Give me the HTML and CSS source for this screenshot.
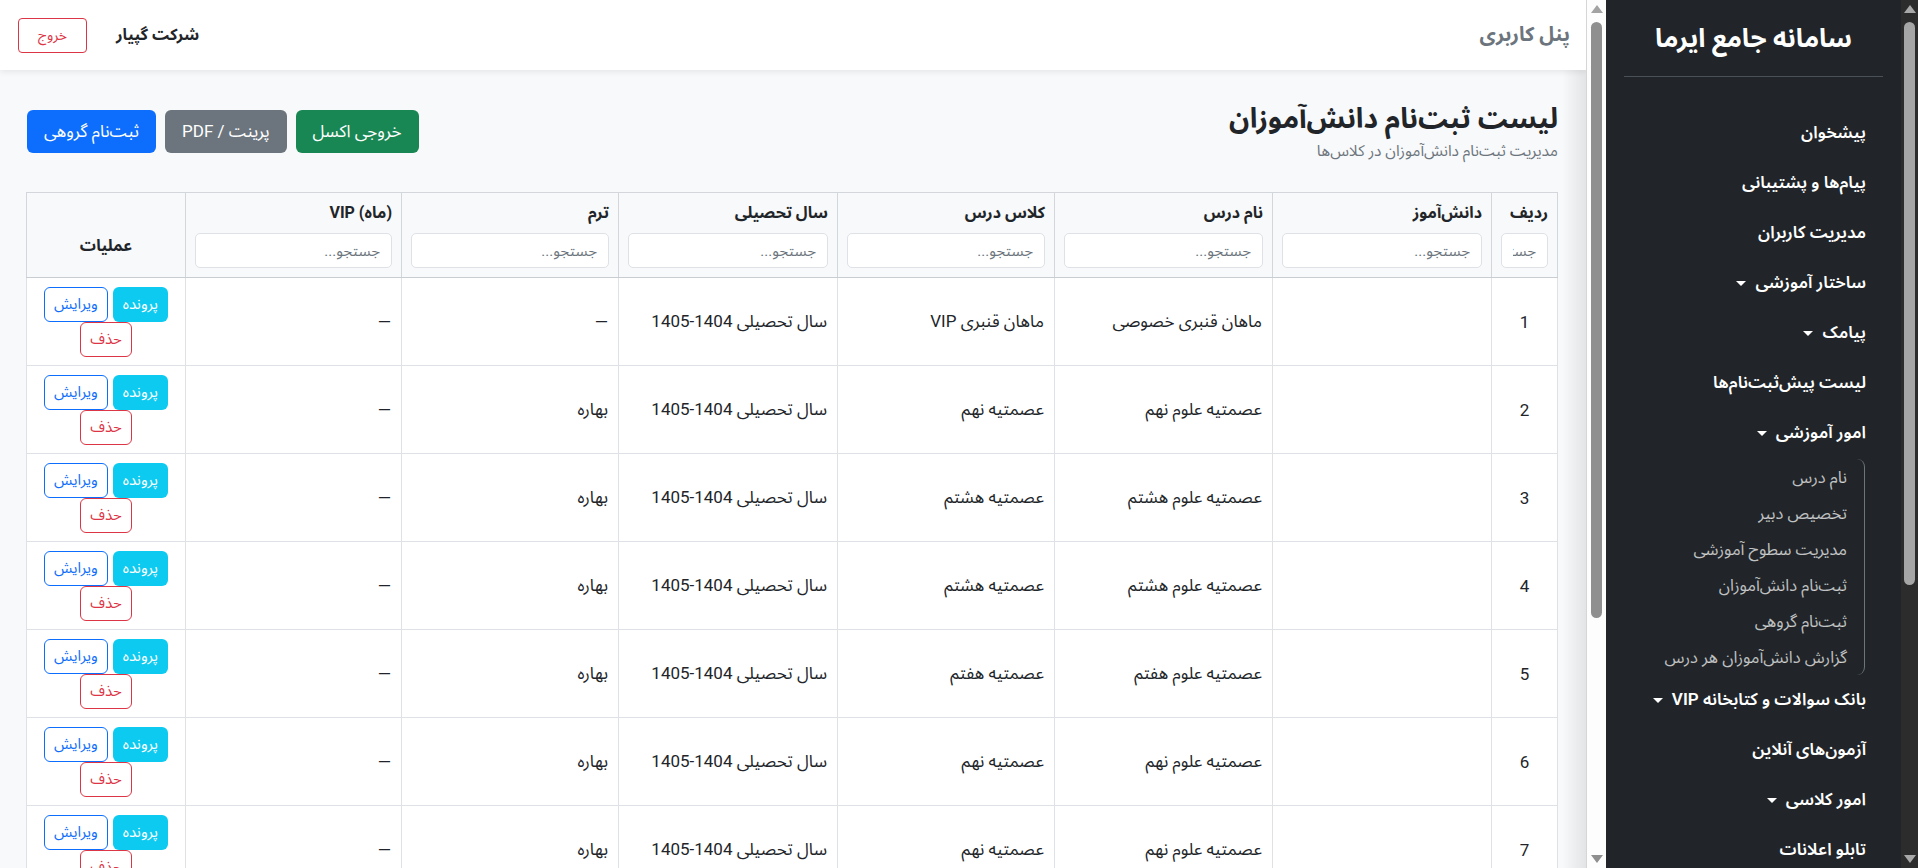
FILE: index.html
```html
<!DOCTYPE html>
<html lang="fa">
<head>
    <meta charset="UTF-8">
    <meta name="viewport" content="width=device-width, initial-scale=1.0">
    <title>لیست ثبت‌نام دانش‌آموزان</title>
    <link rel="stylesheet" href="styles.css">
</head>
<body>

<div class="layout">
    <main class="main" dir="rtl">
        <header class="topbar">
            <div class="panel-title">پنل کاربری</div>
            <div class="topbar-left">
                <span class="company">شرکت گپیار</span>
                <button class="btn btn-logout">خروج</button>
            </div>
        </header>

        <div class="content">
            <div class="page-head">
                <div>
                    <h1 class="page-title">لیست ثبت‌نام دانش‌آموزان</h1>
                    <p class="page-sub">مدیریت ثبت‌نام دانش‌آموزان در کلاس‌ها</p>
                </div>
                <div class="actions">
                    <button class="btn btn-lg btn-success">خروجی اکسل</button>
                    <button class="btn btn-lg btn-secondary">پرینت / PDF</button>
                    <button class="btn btn-lg btn-primary">ثبت‌نام گروهی</button>
                </div>
            </div>

            <table class="grid">
                <colgroup>
                    <col class="w-num">
                    <col class="w-219">
                    <col class="w-218">
                    <col class="w-217">
                    <col class="w-219">
                    <col class="w-217">
                    <col class="w-216">
                    <col class="w-ops">
                </colgroup>
                <thead>
                <tr>
                    <th><div class="th-label">ردیف</div><input placeholder="جستجو..."></th>
                    <th><div class="th-label">دانش‌آموز</div><input placeholder="جستجو..."></th>
                    <th><div class="th-label">نام درس</div><input placeholder="جستجو..."></th>
                    <th><div class="th-label">کلاس درس</div><input placeholder="جستجو..."></th>
                    <th><div class="th-label">سال تحصیلی</div><input placeholder="جستجو..."></th>
                    <th><div class="th-label">ترم</div><input placeholder="جستجو..."></th>
                    <th><div class="th-label">(ماه) VIP</div><input placeholder="جستجو..."></th>
                    <th class="th-ops">عملیات</th>
                </tr>
                </thead>
                <tbody id="rows">
                <!-- rows are filled by the script below -->
                </tbody>
            </table>
        </div>
    </main>

    <!-- scrollbar of the main column -->
    <div class="rail rail-light">
        <span class="arrow up"></span>
        <div class="track"><div class="thumb"></div></div>
        <span class="arrow down"></span>
    </div>

    <aside class="sidebar" dir="rtl">
        <div class="brand">سامانه جامع ایرما</div>
        <ul class="nav">
            <li><a class="nav-link">پیشخوان</a></li>
            <li><a class="nav-link">پیام‌ها و پشتیبانی</a></li>
            <li><a class="nav-link">مدیریت کاربران</a></li>
            <li><a class="nav-link toggle">ساختار آموزشی</a></li>
            <li><a class="nav-link toggle">پیامک</a></li>
            <li><a class="nav-link">لیست پیش‌ثبت‌نام‌ها</a></li>
            <li>
                <a class="nav-link toggle">امور آموزشی</a>
                <ul class="submenu">
                    <li><a>نام درس</a></li>
                    <li><a>تخصیص دبیر</a></li>
                    <li><a>مدیریت سطوح آموزشی</a></li>
                    <li><a>ثبت‌نام دانش‌آموزان</a></li>
                    <li><a>ثبت‌نام گروهی</a></li>
                    <li><a>گزارش دانش‌آموزان هر درس</a></li>
                </ul>
            </li>
            <li><a class="nav-link toggle">بانک سوالات و کتابخانه VIP</a></li>
            <li><a class="nav-link">آزمون‌های آنلاین</a></li>
            <li><a class="nav-link toggle">امور کلاسی</a></li>
            <li><a class="nav-link">تابلو اعلانات</a></li>
            <li><a class="nav-link">گزارش‌ها</a></li>
            <li><a class="nav-link toggle">امور مالی</a></li>
            <li><a class="nav-link">تنظیمات</a></li>
        </ul>
    </aside>

    <!-- scrollbar of the sidebar -->
    <div class="rail rail-dark">
        <span class="arrow up"></span>
        <div class="track"><div class="thumb"></div></div>
        <span class="arrow down"></span>
    </div>
</div>

<script>
    // Registrations shown in the table
    const YEAR = 'سال تحصیلی 1404\u20101405';
    const registrations = [
        { course: 'ماهان قنبری خصوصی', klass: 'ماهان قنبری VIP', term: '—' },
        { course: 'عصمتیه علوم نهم', klass: 'عصمتیه نهم', term: 'بهاره' },
        { course: 'عصمتیه علوم هشتم', klass: 'عصمتیه هشتم', term: 'بهاره' },
        { course: 'عصمتیه علوم هشتم', klass: 'عصمتیه هشتم', term: 'بهاره' },
        { course: 'عصمتیه علوم هفتم', klass: 'عصمتیه هفتم', term: 'بهاره' },
        { course: 'عصمتیه علوم نهم', klass: 'عصمتیه نهم', term: 'بهاره' },
        { course: 'عصمتیه علوم نهم', klass: 'عصمتیه نهم', term: 'بهاره' },
        { course: 'عصمتیه علوم هفتم', klass: 'عصمتیه هفتم', term: 'بهاره' }
    ];

    const tbody = document.getElementById('rows');
    registrations.forEach((r, i) => {
        tbody.innerHTML += `<tr>
            <td class="num">${i + 1}</td>
            <td></td>
            <td>${r.course}</td>
            <td>${r.klass}</td>
            <td>${YEAR}</td>
            <td>${r.term}</td>
            <td>—</td>
            <td class="ops-cell">
                <div class="ops">
                    <button class="btn btn-sm btn-info">پرونده</button>
                    <button class="btn btn-sm btn-outline-primary">ویرایش</button>
                    <button class="btn btn-sm btn-outline-danger">حذف</button>
                </div>
            </td>
        </tr>`;
    });
</script>

</body>
</html>
```

FILE: styles.css
```css
html, body {
    height: 100%;
    margin: 0;
    overflow: hidden;
}

body {
    font-family: Roboto, "Noto Sans Arabic", "DejaVu Sans", sans-serif;
    color: #212529;
    font-size: 16px;
}

.layout {
    display: flex;
    height: 100vh;
}

/* main column */
.main {
    flex: 1;
    min-width: 0;
    overflow: hidden;
    background: linear-gradient(to left, #e2e4e6 0, #f8f9fa 24px);
}

.topbar {
    height: 70px;
    box-sizing: border-box;
    padding: 0 16px 0 18px;
    display: flex;
    align-items: center;
    justify-content: space-between;
    background: #fff;
    box-shadow: 0 2px 6px rgba(0, 0, 0, .08);
    position: relative;
    z-index: 2;
}

.panel-title {
    font-size: 20px;
    font-weight: 700;
    color: #6c757d;
}

.topbar-left {
    display: flex;
    align-items: center;
    gap: 29px;
}

.company {
    font-size: 16px;
    font-weight: 700;
}

.btn {
    font-family: inherit;
    border: 1px solid transparent;
    border-radius: 6px;
    background: transparent;
    cursor: pointer;
    box-sizing: border-box;
    white-space: nowrap;
}

.btn-logout {
    height: 35px;
    padding: 0 19px;
    font-size: 14px;
    color: #dc3545;
    border-color: #dc3545;
    border-radius: 4px;
}

.content {
    padding: 32px 28px 40px 27px;
}

.page-head {
    display: flex;
    align-items: center;
    justify-content: space-between;
    margin-bottom: 31px;
}

.page-title {
    margin: 0;
    font-size: 28px;
    line-height: 34px;
    font-weight: 700;
}

.page-sub {
    margin: 5px 0 0;
    font-size: 15.5px;
    line-height: 20px;
    color: #6c757d;
}

.actions {
    display: flex;
    gap: 9px;
}

.btn-lg {
    height: 43px;
    padding: 0 16px;
    font-size: 17px;
    color: #fff;
}

.btn-success { background: #198754; }
.btn-secondary { background: #6c757d; }
.btn-primary { background: #0d6efd; }

/* table */
.grid {
    width: 100%;
    table-layout: fixed;
    border-collapse: collapse;
    background: #fff;
    border: 1px solid #ced4da;
}

.w-num { width: 66px; }
.w-216 { width: 216px; }
.w-217 { width: 217px; }
.w-218 { width: 218px; }
.w-219 { width: 219px; }
.w-ops { width: 159px; }

.grid th {
    background: #f8f9fa;
    padding: 8px 9px 9px;
    text-align: right;
    vertical-align: bottom;
    border: 1px solid #d3d7db;
    border-bottom-color: #c8cdd1;
}

.th-label {
    font-size: 16px;
    font-weight: 700;
    line-height: 24px;
    margin-bottom: 8px;
    white-space: nowrap;
}

.grid th input {
    display: block;
    width: 100%;
    height: 35px;
    box-sizing: border-box;
    padding: 0 11px;
    font-family: inherit;
    font-size: 15px;
    border: 1px solid #dee2e6;
    border-radius: 5px;
    background: #fff;
}

.grid th input::placeholder {
    color: #6c757d;
}

.grid .th-ops {
    text-align: center;
    font-size: 16px;
    padding-bottom: 14px;
}

.grid td {
    height: 71px;
    padding: 8px 10px;
    border: 1px solid #dee2e6;
    text-align: right;
    vertical-align: middle;
    font-size: 17px;
    white-space: nowrap;
}

.grid td.num {
    text-align: center;
}

.ops {
    display: flex;
    flex-wrap: wrap;
    justify-content: center;
    column-gap: 5px;
}

.btn-sm {
    height: 35px;
    padding: 0 9px;
    font-size: 15px;
}

.btn-info {
    background: #0dcaf0;
    color: #fff;
}

.btn-outline-primary {
    color: #0d6efd;
    border-color: #0d6efd;
}

.btn-outline-danger {
    color: #dc3545;
    border-color: #dc3545;
}

/* fake scrollbars */
.rail {
    flex: none;
    display: flex;
    flex-direction: column;
    align-items: center;
}

.rail-light {
    width: 19px;
    background: #fdfdfd;
    border-left: 1px solid #d6d6d6;
}

.rail-dark {
    width: 17px;
    background: #2c2c2c;
}

.arrow {
    flex: none;
    width: 0;
    height: 0;
    margin: 5px 0;
    border-left: 6px solid transparent;
    border-right: 6px solid transparent;
}

.rail-light .arrow.up { border-bottom: 8px solid #a3a3a3; }
.rail-light .arrow.down { border-top: 8px solid #8f8f8f; }
.rail-dark .arrow.up { border-bottom: 8px solid #a8a8a8; }
.rail-dark .arrow.down { border-top: 8px solid #a8a8a8; }

.track {
    flex: 1;
    width: 100%;
    display: flex;
    justify-content: center;
    padding-top: 4px;
}

.thumb {
    width: 11px;
    border-radius: 6px;
}

.rail-light .thumb {
    height: 596px;
    background: #8f8f8f;
}

.rail-dark .thumb {
    height: 563px;
    background: #a6a6a6;
}

/* sidebar */
.sidebar {
    width: 295px;
    flex: none;
    box-sizing: border-box;
    padding: 0 18px;
    overflow: hidden;
    background: #212529;
    color: #fff;
}

.brand {
    height: 76px;
    line-height: 76px;
    text-align: center;
    font-size: 26px;
    font-weight: 700;
    border-bottom: 1px solid #495057;
}

.nav {
    list-style: none;
    margin: 31px 0 0;
    padding: 0;
}

.nav-link {
    display: flex;
    align-items: center;
    height: 50px;
    padding: 0 17px;
    font-size: 17px;
    font-weight: 600;
    color: #fff;
    white-space: nowrap;
}

.nav-link.toggle::after {
    content: "";
    margin-right: 9px;
    border-top: 5px solid #fff;
    border-left: 5px solid transparent;
    border-right: 5px solid transparent;
}

.submenu {
    list-style: none;
    margin: 1px 18px 0 0;
    padding: 0;
    border-right: 1px solid #6c757d;
    border-radius: 0 8px 8px 0;
}

.submenu a {
    display: flex;
    align-items: center;
    height: 36px;
    padding: 0 17px;
    font-size: 16.5px;
    color: rgba(255, 255, 255, .72);
    white-space: nowrap;
}
```
